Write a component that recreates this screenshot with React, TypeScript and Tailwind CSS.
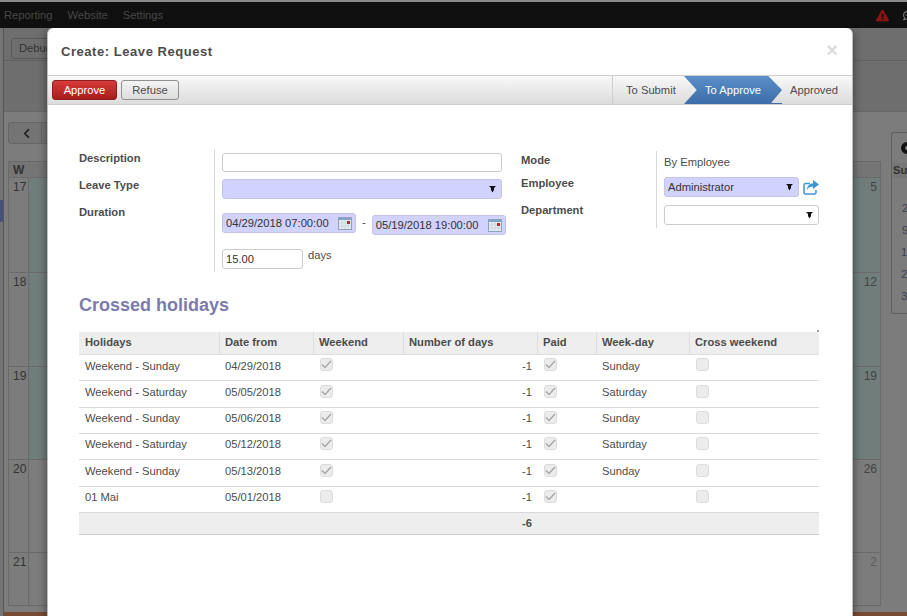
import { FaExclamationTriangle, FaRegCommentDots, FaChevronLeft } from "react-icons/fa";

const font = { fontFamily: '"Liberation Sans", Arial, sans-serif' };

function Arrow() {
  return (
    <svg width="7" height="8" viewBox="0 0 7 8" className="shrink-0">
      <polygon points="0,1 7,1 5,3 5,5 3.5,7.5 2,5 2,3" fill="#111" />
    </svg>
  );
}

function CalIcon() {
  return (
    <svg width="14" height="13" viewBox="0 0 14 13" className="shrink-0">
      <rect x="0.5" y="0.5" width="13" height="12" fill="#e6ecf2" stroke="#8fa3b8" />
      <rect x="1" y="1" width="12" height="2" fill="#7fa6c8" />
      <path d="M1 6h12M1 9h12M4 3v9M7 3v9M10 3v9" stroke="#cdd6df" strokeWidth="1" />
      <rect x="9" y="4" width="3" height="3" fill="#a83232" />
    </svg>
  );
}

function ShareIcon() {
  return (
    <svg width="16" height="15" viewBox="0 0 16 15" className="shrink-0 text-[#3d94d6]">
      <path d="M7 3.5H2.5A1.5 1.5 0 0 0 1 5v7.5A1.5 1.5 0 0 0 2.5 14h9a1.5 1.5 0 0 0 1.5-1.5V10" fill="none" stroke="currentColor" strokeWidth="1.5" />
      <path d="M10 0l6 4.5-6 4.5V6.5C7 6.5 5 7.5 4 10c0-4 2.5-6.5 6-6.5z" fill="currentColor" />
    </svg>
  );
}

function Check({ on }: { on: boolean }) {
  return (
    <div className="flex h-[13px] w-[13px] items-center justify-center rounded-[3px] border border-[#dcdcdc] bg-[#ececec]">
      {on && (
        <svg width="11" height="9" viewBox="0 0 11 9">
          <path d="M1 4.5 L4 7.5 L10 1" fill="none" stroke="#a8a8a8" strokeWidth="1.5" />
        </svg>
      )}
    </div>
  );
}

const rows = [
  { h: "h-[26px]", pb: "pb-[3px]", name: "Weekend - Sunday", date: "04/29/2018", we: true, day: "Sunday" },
  { h: "h-[27px]", pb: "pb-[3px]", name: "Weekend - Saturday", date: "05/05/2018", we: true, day: "Saturday" },
  { h: "h-[26px]", pb: "pb-[5px]", name: "Weekend - Sunday", date: "05/06/2018", we: true, day: "Sunday" },
  { h: "h-[26px]", pb: "pb-[5px]", name: "Weekend - Saturday", date: "05/12/2018", we: true, day: "Saturday" },
  { h: "h-[27px]", pb: "pb-[3px]", name: "Weekend - Sunday", date: "05/13/2018", we: true, day: "Sunday" },
  { h: "h-[26px]", pb: "pb-[5px]", name: "01 Mai", date: "05/01/2018", we: false, day: "" },
];

const calRows = [
  { n: "17", h: "h-[95px]", end: "5", teal: true },
  { n: "18", h: "h-[94px]", end: "12", teal: true },
  { n: "19", h: "h-[93px]", end: "19", teal: true },
  { n: "20", h: "h-[93px]", end: "26", teal: false },
  { n: "21", h: "h-[53px]", end: "2", teal: false },
];

function Background() {
  return (
    <div className="flex h-full flex-col">
      <div className="h-[2px] bg-[#8a8a8a]" />
      <div className="flex h-[26px] items-center justify-between bg-[#101010] pl-[4px] text-[11.2px] text-[#474747]">
        <div className="flex gap-[15px]">
          <span>Reporting</span>
          <span>Website</span>
          <span>Settings</span>
        </div>
        <div className="mr-[-7px] flex items-center gap-[14px]">
          <FaExclamationTriangle className="text-[#8a1414]" size={13} />
          <FaRegCommentDots className="text-[#777]" size={11} />
        </div>
      </div>
      <div className="flex flex-1">
        <div className="w-[3px] shrink-0 bg-[#757575] pt-[84px]">
          <div className="mt-[88px] h-[22px] bg-[#46507a]" />
        </div>
        <div className="flex min-w-0 flex-1 flex-col border-l border-[#555]">
          <div className="flex h-[84px] flex-col border-b border-[#666] bg-[#6e6e6e]">
            <div className="flex h-[33px] items-end border-b border-[#5f5f5f] pl-[7px]">
              <div className="mb-[1px] h-[21px] w-[50px] rounded-[3px] border border-[#585858] pl-[7px] text-[11.2px] leading-[19px] text-[#333]">
                Debug
              </div>
            </div>
          </div>
          <div className="flex flex-1 bg-[#7c7c7c]">
            <div className="flex w-[887px] shrink-0 flex-col pl-[4px] pr-[10px]">
              <div className="mt-[10px] flex h-[22px] w-[60px] items-center rounded-[3px] border border-[#666] bg-[#747474] pl-[12px]">
                <FaChevronLeft className="text-[#222]" size={11} />
                <div className="ml-[9px] h-full border-l border-[#666]" />
              </div>
              <div className="mt-[17px] flex h-[17px] border border-[#6a6a6a] bg-[#757575]">
                <div className="w-[20px] pl-[4px] text-[12px] font-bold leading-[16px] text-[#333]">W</div>
              </div>
              {calRows.map((r) => (
                <div key={r.n} className={`flex justify-between border-b border-[#6a6a6a] ${r.h} ${r.teal ? "bg-[#707d7b]" : ""}`}>
                  <div className="h-full w-[21px] border-x border-[#6a6a6a] bg-[#7c7c7c] pl-[4px] text-[12px] text-[#333]">{r.n}</div>
                  <div className={`border-r border-[#6a6a6a] pr-[3px] text-[12px] ${r.n === "21" ? "text-[#5a5a5a]" : "text-[#444]"}`}>{r.end}</div>
                </div>
              ))}
            </div>
            <div className="mt-[20px] h-[182px] min-w-0 flex-1 overflow-hidden rounded-l-[3px] border border-r-0 border-[#5f5f5f] pl-[1px] text-[11.2px] text-[#3f3f55]">
              <div className="ml-[8px] mt-[9px] h-[12px] w-[12px] rounded-full border-[4px] border-[#111]" />
              <div className="mt-[9px] h-[15px] bg-[#757575] font-bold leading-[14px] text-[#333]">Su</div>
              <div className="mt-[23px] flex flex-col gap-[8px] leading-[14px]">
                <span className="pl-[9px]">2</span>
                <span className="pl-[9px]">9</span>
                <span className="pl-[8px]">1</span>
                <span className="pl-[8px]">2</span>
                <span className="pl-[8px]">3</span>
              </div>
            </div>
          </div>
          <div className="h-[4px] bg-[#7b4a33]" />
        </div>
      </div>
    </div>
  );
}

const fieldBlue = "rounded-[3px] border border-[#c4c4e8] bg-[#d2d2ff]";
const fieldWhite = "rounded-[3px] border border-[#cccccc] bg-white";

function Form() {
  return (
    <div className="mt-[44px] flex pl-[31px] text-[11.2px] text-[#4c4c4c]">
      <div className="flex w-[135px] flex-col gap-[13px] pt-[2px] font-bold leading-[14px]">
        <span>Description</span>
        <span>Leave Type</span>
        <span>Duration</span>
      </div>
      <div className="flex w-[299px] flex-col border-l border-[#d8d8d8] pb-[3px] pl-[7px]">
        <div className={`mt-[4px] h-[19px] w-[280px] ${fieldWhite}`} />
        <div className={`mt-[7px] flex h-[20px] w-[280px] items-center justify-end pr-[5px] ${fieldBlue}`}>
          <Arrow />
        </div>
        <div className="mt-[14px] flex items-start gap-[6px]">
          <div className={`flex h-[20px] w-[134px] items-center justify-between pl-[3px] pr-[3px] text-[#333] ${fieldBlue}`}>
            <span>04/29/2018 07:00:00</span>
            <CalIcon />
          </div>
          <span className="mt-[1px]">-</span>
          <div className={`mt-[2px] flex h-[20px] w-[134px] items-center justify-between pl-[3px] pr-[3px] text-[#333] ${fieldBlue}`}>
            <span>05/19/2018 19:00:00</span>
            <CalIcon />
          </div>
        </div>
        <div className="mt-[14px] flex items-start gap-[5px]">
          <div className={`flex h-[20px] w-[81px] items-center pl-[3px] text-[#333] ${fieldWhite}`}>15.00</div>
          <span className="mt-[-1px] leading-[14px]">days</span>
        </div>
      </div>
      <div className="flex w-[143px] flex-col gap-[9px] pl-[8px] pt-[4px] font-bold leading-[14px]">
        <span>Mode</span>
        <span>Employee</span>
        <span className="mt-[4px]">Department</span>
      </div>
      <div className="mt-[2px] flex h-[77px] w-[163px] flex-col border-l border-[#d8d8d8] pl-[7px]">
        <span className="mt-[4px] leading-[14px]">By Employee</span>
        <div className="mt-[8px] flex items-center gap-[4px]">
          <div className={`flex h-[20px] w-[135px] items-center justify-between pl-[3px] pr-[5px] text-[#333] ${fieldBlue}`}>
            <span>Administrator</span>
            <Arrow />
          </div>
          <ShareIcon />
        </div>
        <div className={`mt-[8px] flex h-[20px] w-[155px] items-center justify-end pr-[5px] ${fieldWhite}`}>
          <Arrow />
        </div>
      </div>
    </div>
  );
}

function HolidayTable() {
  const th = "border-b border-l border-[#dedede] pb-[2px] pl-[5px] text-left font-bold";
  const td = "border-b border-[#d8d8d8] pl-[6px]";
  const box = "border-b border-[#d8d8d8] pl-[7px]";
  return (
    <div className="relative ml-[31px] mt-[17px] w-[740px]">
      <div className="absolute right-0 top-[-2px] h-[2px] w-[2px] bg-[#a0a0a0]" />
      <table className="w-full table-fixed border-separate border-spacing-0 text-[11.2px] text-[#4c4c4c]">
        <colgroup>
          <col className="w-[140px]" />
          <col className="w-[94px]" />
          <col className="w-[90px]" />
          <col className="w-[134px]" />
          <col className="w-[59px]" />
          <col className="w-[93px]" />
          <col className="w-[130px]" />
        </colgroup>
        <thead>
          <tr className="h-[23px] bg-[#eeeeee]">
            <th className="border-b border-[#dedede] pb-[2px] pl-[6px] text-left font-bold">Holidays</th>
            <th className={th}>Date from</th>
            <th className={th}>Weekend</th>
            <th className={th}>Number of days</th>
            <th className={th}>Paid</th>
            <th className={th}>Week-day</th>
            <th className={th}>Cross weekend</th>
          </tr>
        </thead>
        <tbody>
          {rows.map((r, i) => (
            <tr key={i} className={r.h}>
              <td className={`${td} ${r.pb}`}>{r.name}</td>
              <td className={`${td} ${r.pb}`}>{r.date}</td>
              <td className={box}><div className="mb-[6px]"><Check on={r.we} /></div></td>
              <td className={`border-b border-[#d8d8d8] pr-[5px] text-right ${r.pb}`}>-1</td>
              <td className={box}><div className="mb-[6px]"><Check on /></div></td>
              <td className={`${td} ${r.pb}`}>{r.day}</td>
              <td className={box}><div className="mb-[6px]"><Check on={false} /></div></td>
            </tr>
          ))}
        </tbody>
        <tfoot>
          <tr className="h-[22px] bg-[#eeeeee]">
            <td colSpan={3} className="border-b border-[#cccccc]" />
            <td className="border-b border-[#cccccc] pr-[5px] text-right font-bold">-6</td>
            <td colSpan={3} className="border-b border-[#cccccc]" />
          </tr>
        </tfoot>
      </table>
    </div>
  );
}

function Modal() {
  return (
    <div className="absolute bottom-0 left-[47px] top-[28px] flex w-[806px] flex-col rounded-t-[6px] border-x border-[#bdbdbd] bg-white shadow-[0_3px_9px_rgba(0,0,0,0.5)]">
      <div className="flex h-[47px] items-center justify-between pl-[13px] pr-[14px]">
        <span className="text-[13px] font-bold tracking-[0.55px] text-[#4c4c4c]">Create: Leave Request</span>
        <span className="mb-[3px] text-[20px] font-bold leading-none text-[#dcdcdc]">×</span>
      </div>
      <div className="flex h-[30px] items-stretch justify-between border-y border-[#cfcfcf] bg-gradient-to-b from-[#f8f8f8] to-[#dcdcdc]">
        <div className="flex items-center gap-[4px] pl-[4px] text-[11.2px]">
          <button className="h-[20px] w-[65px] rounded-[3px] border border-[#8f1f1f] bg-gradient-to-b from-[#d93b3b] to-[#a81c1c] text-white">Approve</button>
          <button className="h-[20px] w-[58px] rounded-[3px] border border-[#909090] bg-gradient-to-b from-[#f4f4f4] to-[#dcdcdc] text-[#4c4c4c]">Refuse</button>
        </div>
        <div className="relative flex items-stretch text-[11.2px] text-[#4c4c4c]">
          <div className="flex w-[72px] items-center border-l border-[#cfcfcf] pl-[13px]">To Submit</div>
          <div className="flex w-[98px] items-center bg-gradient-to-b from-[#5a8fc9] to-[#3d6da6] pl-[21px] text-white [clip-path:polygon(0_0,86%_0,100%_50%,88%_100%,0_100%,13%_50%)]">
            To Approve
          </div>
          <div className="flex w-[70px] items-center pl-[8px]">Approved</div>
          <div className="absolute bottom-0 left-[158px] h-[1px] w-[12px] bg-[#3d6da6]" />
        </div>
      </div>
      <Form />
      <h1 className="ml-[31px] mt-[23px] text-[18px] font-bold leading-[20px] text-[#7c7bad]">Crossed holidays</h1>
      <HolidayTable />
    </div>
  );
}

export default function App() {
  return (
    <div className="relative h-[616px] w-[907px] overflow-hidden bg-[#7c7c7c]" style={font}>
      <Background />
      <Modal />
    </div>
  );
}
